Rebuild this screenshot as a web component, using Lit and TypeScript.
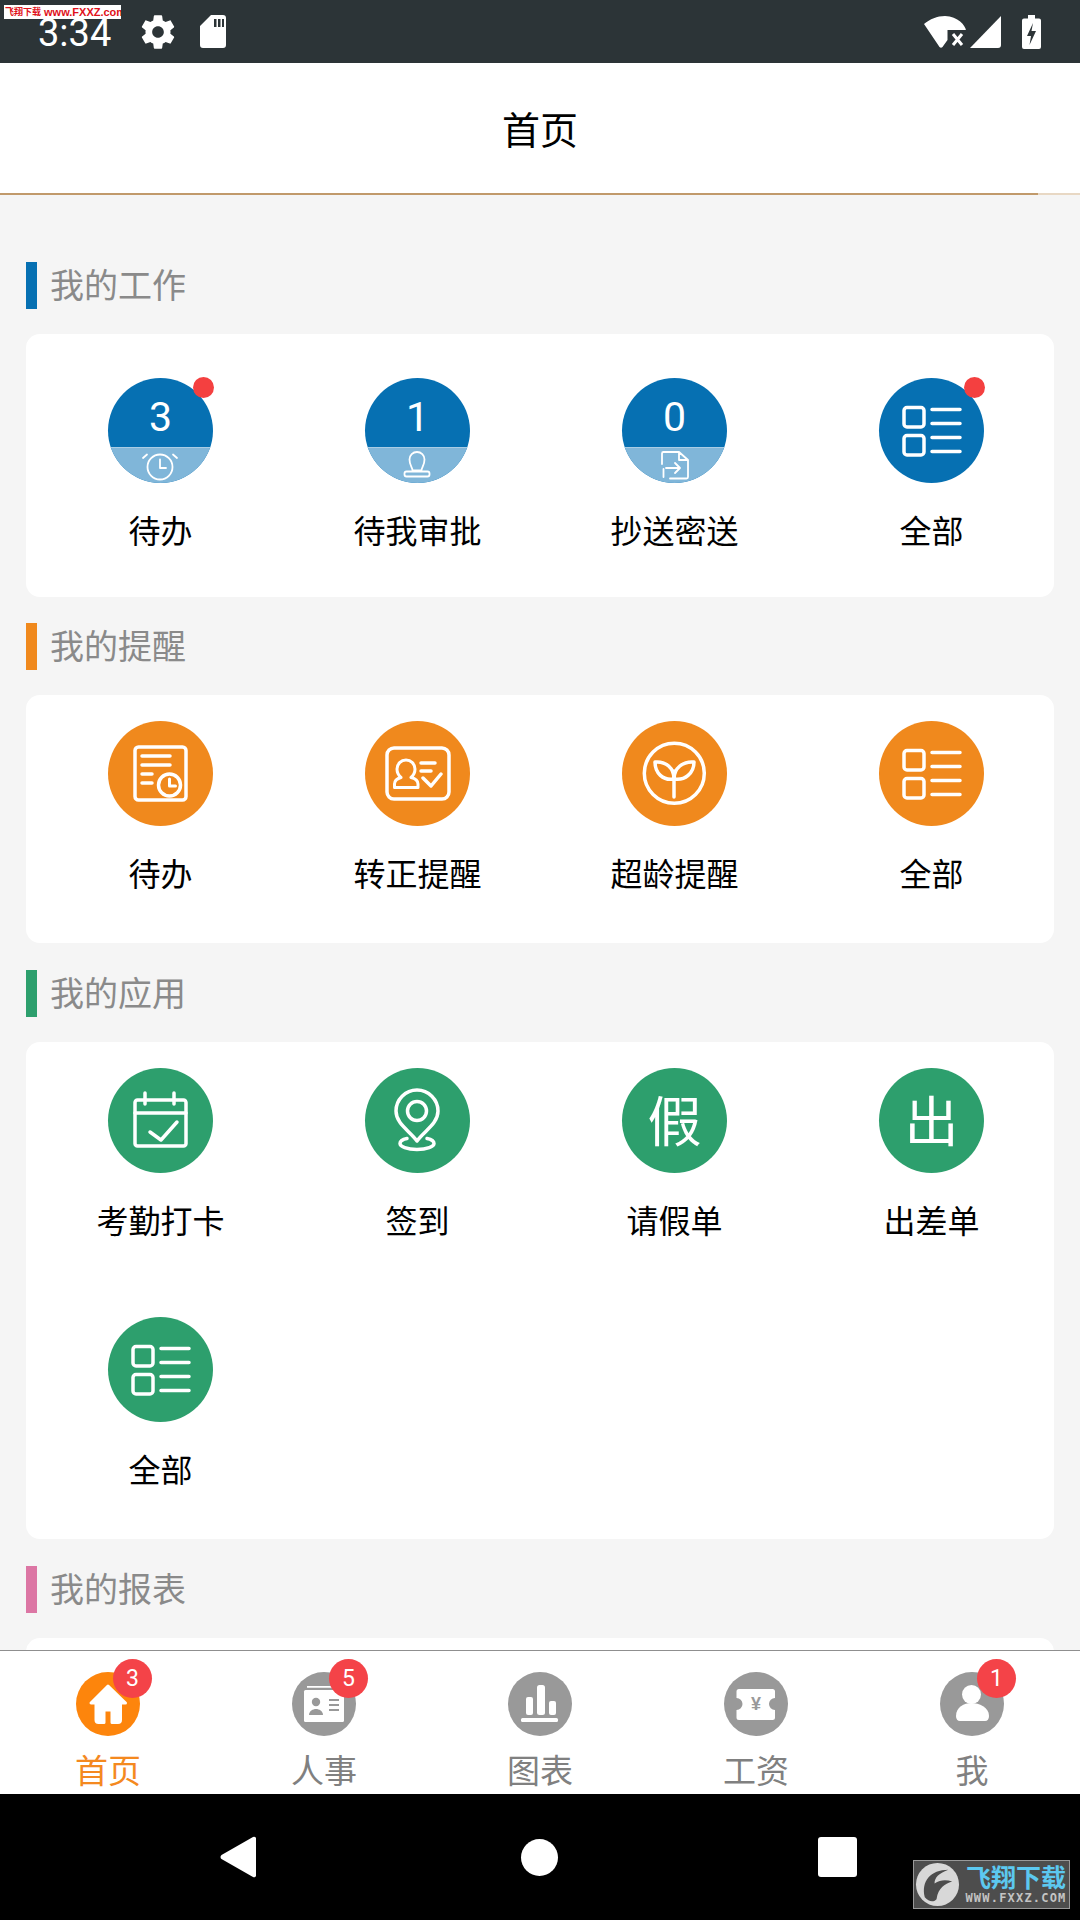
import { LitElement, html, css, svg } from "lit";
import { customElement } from "lit/decorators.js";

const listIcon = svg`
  <rect x="25" y="29.500" width="20" height="19.500" rx="3"/><rect x="25" y="57.500" width="20" height="19.500" rx="3"/>
  <path d="M53 31.500h28M53 45.500h28M53 59.500h28M53 73.500h28"/>`;

const lineIcons: Record<string, unknown> = {
  list: listIcon,
  doc: svg`
    <rect x="27" y="26" width="51" height="53" rx="3.500"/>
    <path d="M34 35h28M34 44h28M34 53h10M34 62h10"/>
    <circle cx="61.500" cy="64" r="11" class="fill"/>
    <path d="M61.500 58v7h6" stroke-width="3"/>`,
  id: svg`
    <rect x="22" y="27" width="62" height="51" rx="7"/>
    <path d="M36 56.500c-3-2.500-4-5-4-8.500a9 9 0 0 1 18 0c0 3.500-1 6-4 8.500 4 1 7 3 7 6.500v3.500H29.500V63c0-3.500 3-5.500 6.500-6.500z" stroke-width="3"/>
    <path d="M56 42h14M56 50h10M58 57l8 8 10-12"/>`,
  sprout: svg`
    <circle cx="52.300" cy="52.300" r="30"/>
    <path d="M52 50v26"/>
    <path d="M33 41c11-1 19 6 19 17-11 2-19-6-19-17zM72 41c-11-1-20 6-20 17 11 2 20-6 20-17z"/>`,
  cal: svg`
    <rect x="27" y="32" width="51" height="46" rx="2.500"/>
    <path d="M27 45h51M37 25v11M66 25v11M42 64l11 8 16-18"/>`,
  pin: svg`
    <path d="M52 73C45 63 31 56 31 43a21 21 0 0 1 42 0c0 13-14 20-21 30z"/>
    <circle cx="52" cy="43" r="9.500"/>
    <path d="M42 70.500c-5 1-7 3-7 5 0 3 7 6 17 6s17-3 17-6c0-2-2-4-7-5"/>`,
};

const smallIcons: Record<string, unknown> = {
  alarm: svg`
    <circle cx="52" cy="20" r="12.500"/>
    <path d="M52 12.500V21h6M39 7.500l-4 3.500M65 7.500l4 3.500"/>`,
  stamp: svg`
    <path d="M47.500 23.500c0-3-3-5-3-11a7.500 7.500 0 0 1 15 0c0 6-3 8-3 11z"/>
    <rect x="39.500" y="24.500" width="25" height="5" rx="2"/>`,
  copy: svg`
    <path d="M43 5h14l9 8v17a1.500 1.500 0 0 1-1.500 1.500H48M57 5v8h9M41.500 5h1.500M41.500 22v8M41.500 5a1.500 1.500 0 0 0-1.500 1.500V17"/>
    <path d="M44 21h13M53 16l5 5-5 5"/>`,
};

interface Item { label: string; icon?: string; num?: string; small?: string; dot?: boolean; glyph?: string; }
interface Section { title: string; cls: string; items: Item[]; }

const sections: Section[] = [
  { title: "我的工作", cls: "blue first", items: [
    { label: "待办", num: "3", small: "alarm", dot: true },
    { label: "待我审批", num: "1", small: "stamp" },
    { label: "抄送密送", num: "0", small: "copy" },
    { label: "全部", icon: "list", dot: true },
  ]},
  { title: "我的提醒", cls: "orange", items: [
    { label: "待办", icon: "doc" },
    { label: "转正提醒", icon: "id" },
    { label: "超龄提醒", icon: "sprout" },
    { label: "全部", icon: "list" },
  ]},
  { title: "我的应用", cls: "green", items: [
    { label: "考勤打卡", icon: "cal" },
    { label: "签到", icon: "pin" },
    { label: "请假单", glyph: "假" },
    { label: "出差单", glyph: "出" },
    { label: "全部", icon: "list" },
  ]},
];

const tabIcons: Record<string, unknown> = {
  home: svg`<path fill="#fff" stroke="#fff" stroke-width="3" stroke-linejoin="round" d="M32 14 15 31h5v17c0 1.500 1 2.500 2.500 2.500H28V38h8v12.500h6c1.500 0 2.500-1 2.500-2.500V31h5z"/>`,
  card: svg`
    <path fill="#fff" d="M15 14h33v1.800H15z"/>
    <rect x="12" y="18" width="40" height="32" rx="1.500" fill="#fff"/>
    <circle cx="24" cy="30" r="4.200" fill="#999"/>
    <path fill="#999" d="M17 43c0-4 4-6 7-6s7 2 7 6z"/>
    <path stroke="#999" stroke-width="2" d="M37 28h10M37 33h10M37 38h10"/>`,
  chart: svg`
    <rect x="18" y="25" width="7" height="18" rx="2" fill="#fff"/>
    <rect x="29" y="13" width="8" height="30" rx="2.500" fill="#fff"/>
    <rect x="41" y="29" width="7" height="14" rx="2" fill="#fff"/>
    <rect x="13" y="46" width="37" height="4" rx="1.500" fill="#fff"/>`,
  ticket: svg`<path fill="#fff" d="M15 17h33.500a2.500 2.500 0 0 1 2.500 2.500V26a6 6 0 0 0 0 12v7.500a2.500 2.500 0 0 1-2.500 2.500H15a2.500 2.500 0 0 1-2.500-2.500V38a6 6 0 0 0 0-12v-6.500A2.500 2.500 0 0 1 15 17z"/>`,
  user: svg`
    <circle cx="31.500" cy="22.500" r="9.500" fill="#fff"/>
    <path fill="#fff" d="M16 44c0-9 8-13 15.500-13S49 35 49 44c0 3-1.500 5-4 5H20c-2.500 0-4-2-4-5z"/>`,
};

const tabs = [
  { label: "首页", icon: "home", badge: "3", active: true },
  { label: "人事", icon: "card", badge: "5" },
  { label: "图表", icon: "chart" },
  { label: "工资", icon: "ticket", yen: true },
  { label: "我", icon: "user", badge: "1" },
];

@customElement("app-root")
export class AppRoot extends LitElement {
  static styles = css`
    :host { display: block; width: 1080px; height: 1920px; overflow: hidden; font-family: "Noto Sans CJK SC", "Noto Sans", sans-serif; background: #f5f5f5; }
    .page { display: flex; flex-direction: column; height: 1920px; position: relative; }
    .status { height: 63px; flex: none; background: #2c3437; display: flex; align-items: center; padding: 0 39px 0 38px; color: #fff; }
    .time { font-family: Roboto, sans-serif; font-size: 38px; line-height: 63px; padding-top: 4px; width: 100px; }
    .status svg { display: block; fill: #fff; }
    .sd { margin-left: 22px; }
    .spacer { flex: 1; }
    .wifi { margin-right: 4px; }
    .sig { margin-right: 21px; }
    .wm-top { position: absolute; left: 4px; top: 5px; width: 117px; height: 14px; padding-left: 1px; box-sizing: border-box; background: #fff; color: #e0101a; display: flex; align-items: center; gap: 3px; white-space: nowrap; overflow: hidden; }
    .wm-top b { font-size: 9px; line-height: 14px; font-weight: 700; }
    .wm-top span { font: 700 11px/14px "Liberation Sans", sans-serif; }
    .header { height: 132px; padding-bottom: 2px; box-sizing: border-box; flex: none; background: #fff; border-bottom: 2px solid; border-image: linear-gradient(90deg, #c19a6b 0%, #c19a6b 96%, #e8d8c4 96%, #e8d8c4 100%) 1; display: flex; align-items: center; justify-content: center; font-size: 38px; color: #000; }
    .content { flex: 1; min-height: 0; overflow: hidden; padding: 27px 26px 0; }
    .sec-head { display: flex; align-items: center; height: 47px; margin-bottom: 25px; font-size: 34px; color: #8a8a8a; }
    .sec-head span { display: block; margin-top: -4px; }
    .sec-head i { width: 11px; height: 47px; margin-right: 13px; flex: none; }
    .first .sec-head { margin-top: 40px; }
    .blue .sec-head i { background: #0670b2; }
    .orange .sec-head i { background: #f0891d; }
    .green .sec-head i { background: #2d9f6d; }
    .pink .sec-head i { background: #dc76a4; }
    .card { background: #fff; border-radius: 14px; display: grid; grid-template-columns: repeat(4, 257px); row-gap: 73px; padding: 26px 0 46px 6px; margin-bottom: 27px; }
    .first .card { padding: 44px 0 43px 6px; margin-bottom: 26px; }
    .cell { display: flex; flex-direction: column; align-items: center; }
    .ic-wrap { position: relative; width: 105px; height: 105px; }
    .ic { width: 105px; height: 105px; border-radius: 50%; overflow: hidden; color: #fff; display: flex; flex-direction: column; align-items: center; justify-content: center; }
    .blue .ic { background: #0670b2; }
    .orange .ic { background: #f0891d; }
    .green .ic { background: #2d9f6d; }
    .ic svg { display: block; fill: none; stroke: #fff; stroke-width: 3.500; stroke-linecap: round; stroke-linejoin: round; }
    .ic svg.big { width: 105px; height: 105px; }
    .orange .ic .fill { fill: #f0891d; }
    .num { height: 69px; width: 100%; display: flex; align-items: center; justify-content: center; padding-top: 9px; box-sizing: border-box; font: 400 41px/1 Roboto, sans-serif; flex: none; }
    .low { height: 36px; width: 100%; flex: none; background: #80b6d9; border-top: 1px solid #a9cde5; box-sizing: border-box; }
    .low svg { stroke-width: 1.800; width: 105px; height: 36px; margin-top: -1px; }
    .glyph { font-size: 54px; line-height: 105px; font-weight: 400; margin-top: -4px; }
    .dot { position: absolute; right: -1px; top: -1px; width: 21px; height: 21px; border-radius: 50%; background: #f44040; }
    .lbl { margin: 23px 0 2px; font-size: 32px; line-height: 46px; color: #000; white-space: nowrap; }
    .stub { height: 60px; padding: 0; margin: 0; }
    .tabbar { height: 143px; flex: none; background: #fff; border-top: 1px solid #8f8f8f; display: grid; grid-template-columns: repeat(5, 216px); overflow: hidden; }
    .tab { display: flex; flex-direction: column; align-items: center; padding-top: 21px; color: #808080; font-size: 33px; }
    .tab.active { color: #f4891f; }
    .t-ic { position: relative; width: 64px; height: 64px; border-radius: 50%; background: #999; }
    .tab.active .t-ic { background: #fd850c; }
    .t-ic svg { display: block; }
    .yen { position: absolute; inset: 0; display: flex; align-items: center; justify-content: center; color: #999; font: 700 18px/64px "Liberation Sans", sans-serif; }
    .badge { position: absolute; left: 37px; top: -13px; width: 39px; height: 39px; border-radius: 50%; background: #f44348; color: #fff; font: 400 23px/39px Roboto, sans-serif; text-align: center; }
    .t-lbl { margin-top: 10px; line-height: 46px; white-space: nowrap; }
    .nav { height: 126px; flex: none; background: #000; display: flex; align-items: center; padding-left: 220px; position: relative; }
    .nav svg { display: block; fill: #fff; }
    .nav .c { width: 37px; height: 37px; border-radius: 50%; background: #fff; margin-left: 265px; }
    .nav .s { width: 39px; height: 40px; border-radius: 3px; background: #fff; margin-left: 260px; }
    .wm { position: absolute; left: 913px; top: 66px; width: 157px; height: 49px; box-sizing: border-box; background: #4d4d4d; border: 1px solid #999; display: flex; align-items: center; padding-left: 1px; gap: 5px; overflow: hidden; }
    .wm svg { flex: none; }
    .wm-t { display: flex; flex-direction: column; align-items: center; flex: none; width: 102px; }
    .wm-a { color: #5cc8f0; font-size: 25px; font-weight: 700; line-height: 29px; margin-top: -3px; }
    .wm-b { color: #c4c4c4; font: 700 12px/14px "DejaVu Sans Mono", monospace; letter-spacing: 1.200px; white-space: nowrap; }
  `;

  private renderCell(it: Item) {
    return html`<div class="cell">
      <div class="ic-wrap">
        <div class="ic">
          ${it.num
            ? html`<div class="num">${it.num}</div>
                <div class="low"><svg viewBox="0 0 105 36">${smallIcons[it.small!]}</svg></div>`
            : it.glyph
              ? html`<div class="glyph">${it.glyph}</div>`
              : html`<svg class="big" viewBox="0 0 105 105">${lineIcons[it.icon!]}</svg>`}
        </div>
        ${it.dot ? html`<div class="dot"></div>` : ""}
      </div>
      <div class="lbl">${it.label}</div>
    </div>`;
  }

  render() {
    return html`<div class="page">
      <div class="status">
        <div class="time">3:34</div>
        <svg width="40" height="40" viewBox="0 0 24 24"><path d="M19.43 12.98c.04-.32.07-.64.07-.98s-.03-.66-.07-.98l2.110-1.650c.19-.15.24-.42.12-.64l-2-3.460c-.12-.22-.39-.3-.61-.22l-2.490 1c-.52-.4-1.080-.73-1.690-.98l-.38-2.650C14.460 2.180 14.250 2 14 2h-4c-.25 0-.46.18-.49.42l-.38 2.650c-.61.25-1.170.59-1.690.98l-2.490-1c-.23-.09-.49 0-.61.22l-2 3.460c-.13.22-.07.49.12.64l2.110 1.650c-.04.32-.07.65-.07.98s.03.66.07.98l-2.110 1.650c-.19.15-.24.42-.12.64l2 3.460c.12.22.39.3.61.22l2.490-1c.52.4 1.080.73 1.690.98l.38 2.650c.03.24.24.42.49.42h4c.25 0 .46-.18.49-.42l.38-2.650c.61-.25 1.170-.59 1.690-.98l2.490 1c.23.09.49 0 .61-.22l2-3.460c.12-.22.07-.49-.12-.64l-2.110-1.650zM12 15.500c-1.930 0-3.500-1.570-3.500-3.500s1.570-3.500 3.500-3.500 3.500 1.570 3.500 3.500-1.570 3.500-3.500 3.500z"/></svg>
        <svg class="sd" width="26" height="33" viewBox="0 0 26 33"><path fill-rule="evenodd" d="M11 0h12a3 3 0 0 1 3 3v27a3 3 0 0 1-3 3H3a3 3 0 0 1-3-3V11zM14 4v8h2.500V4zM18 4v8h2.500V4zM22 4v8h2V4z"/></svg>
        <div class="spacer"></div>
        <svg class="wifi" width="42" height="32" viewBox="0 0 42 32"><path d="M21 0C13 0 6 3 0 8l15.500 23c1 1 2 1 3 0l5-7V14h18.400C41.500 10 34 0 21 0z"/><path stroke="#fff" stroke-width="3" d="M29 18l9 11M38 18l-9 11"/></svg>
        <svg class="sig" width="31" height="32" viewBox="0 0 31 32"><path d="M31 0v29a3 3 0 0 1-3 3H0z"/></svg>
        <svg width="19" height="34" viewBox="0 0 19 34"><path fill-rule="evenodd" d="M6 0h7v3.500h4a2 2 0 0 1 2 2V32a2 2 0 0 1-2 2H2a2 2 0 0 1-2-2V5.500a2 2 0 0 1 2-2h4zM11 8l-6 13h4l-1.500 9 6.500-14h-4.500z"/></svg>
      </div>
      <div class="wm-top"><b>飞翔下载</b><span>www.FXXZ.com</span></div>
      <div class="header">首页</div>
      <div class="content">
        ${sections.map(s => html`<div class=${s.cls}>
          <div class="sec-head"><i></i><span>${s.title}</span></div>
          <div class="card">${s.items.map(i => this.renderCell(i))}</div>
        </div>`)}
        <div class="pink">
          <div class="sec-head"><i></i><span>我的报表</span></div>
          <div class="card stub"></div>
        </div>
      </div>
      <div class="tabbar">
        ${tabs.map(t => html`<div class="tab ${t.active ? "active" : ""}">
          <div class="t-ic">
            <svg width="64" height="64" viewBox="0 0 64 64">${tabIcons[t.icon]}</svg>
            ${t.yen ? html`<div class="yen">¥</div>` : ""}
            ${t.badge ? html`<div class="badge">${t.badge}</div>` : ""}
          </div>
          <div class="t-lbl">${t.label}</div>
        </div>`)}
      </div>
      <div class="nav">
        <svg width="36" height="42" viewBox="0 0 36 42"><path d="M33 1 1.500 19a2.500 2.500 0 0 0 0 4L33 41a2 2 0 0 0 3-2V3a2 2 0 0 0-3-2z"/></svg>
        <div class="c"></div>
        <div class="s"></div>
        <div class="wm">
          <svg width="45" height="45" viewBox="0 0 46 46"><circle cx="23" cy="23" r="22" fill="#d8d8d8"/><path d="M10 36C6 20 16 8 34 8c-10 4-14 8-14 14 6-4 12-4 18-2-8 3-14 6-16 18-4 4-8 2-12-2z" fill="#4d4d4d"/></svg>
          <div class="wm-t"><div class="wm-a">飞翔下载</div><div class="wm-b">WWW.FXXZ.COM</div></div>
        </div>
      </div>
    </div>`;
  }
}
